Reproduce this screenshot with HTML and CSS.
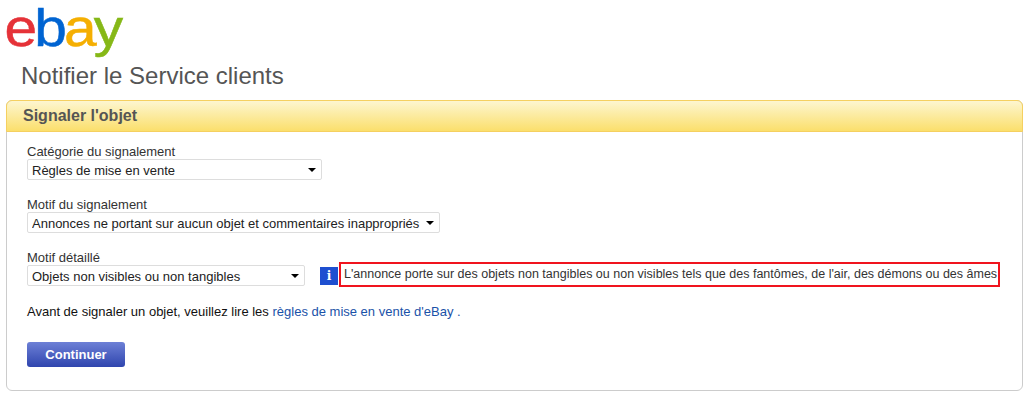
FILE: index.html
```html
<!DOCTYPE html>
<html lang="fr">
<head>
    <meta charset="UTF-8">
    <title>Notifier le Service clients</title>
    <link rel="stylesheet" href="styles.css">
</head>
<body>
    <div class="logo"><span class="logo-e">e</span><span class="logo-b">b</span><span class="logo-a">a</span><span class="logo-y">y</span></div>
    <h1>Notifier le Service clients</h1>

    <div class="panel">
        <h2 class="panel-title">Signaler l'objet</h2>
        <div class="panel-body">
            <div class="field">
                <label for="categorie">Catégorie du signalement</label>
                <div class="select-wrap select-cat">
                    <select id="categorie">
                        <option>Règles de mise en vente</option>
                    </select>
                </div>
            </div>
            <div class="field">
                <label for="motif">Motif du signalement</label>
                <div class="select-wrap select-motif">
                    <select id="motif">
                        <option>Annonces ne portant sur aucun objet et commentaires inappropriés</option>
                    </select>
                </div>
            </div>
            <div class="field">
                <label for="detail">Motif détaillé</label>
                <div class="detail-row">
                    <div class="select-wrap select-detail">
                        <select id="detail">
                            <option>Objets non visibles ou non tangibles</option>
                        </select>
                    </div>
                    <span class="info-icon">i</span>
                    <div class="notice">L'annonce porte sur des objets non tangibles ou non visibles tels que des fantômes, de l'air, des démons ou des âmes</div>
                </div>
            </div>
            <p class="rules">Avant de signaler un objet, veuillez lire les <a href="#">règles de mise en vente d'eBay .</a></p>
            <button type="button" class="btn-continue">Continuer</button>
        </div>
    </div>
</body>
</html>
```

FILE: styles.css
```css
body {
    margin: 0;
    background: #fff;
    font-family: "Liberation Sans", Arial, sans-serif;
    font-size: 13px;
    color: #333;
}
.logo {
    width: 100px;
    height: 57px;
    padding-left: 4px;
    font-size: 51px;
    line-height: 57px;
    letter-spacing: -2.5px;
    white-space: nowrap;
    -webkit-text-stroke: 0.5px;
    transform: scaleX(1.15);
    transform-origin: left;
}
.logo-e { color: #e53238; }
.logo-b { color: #0064d2; }
.logo-a { color: #f5af02; }
.logo-y { color: #86b817; }
h1 {
    margin: 0 0 6px 21px;
    height: 37px;
    font-size: 24px;
    font-weight: normal;
    line-height: 37px;
    color: #555;
}
.panel {
    margin: 0 9px 0 6px;
    height: 289px;
    border: 1px solid #ccc;
    border-radius: 6px;
}
.panel-title {
    margin: -1px -1px 0;
    height: 30px;
    border: 1px solid #f5d060;
    border-radius: 6px 6px 0 0;
    background: linear-gradient(#fdf6d0, #fbdf6c);
    padding-left: 16px;
    font-size: 16px;
    line-height: 30px;
    color: #555;
}
.panel-body {
    padding: 12px 20px 0;
}
.field {
    margin-bottom: 17px;
}
.field label {
    display: block;
    height: 15px;
    font-size: 13px;
    line-height: 15px;
    color: #333;
}
.select-wrap {
    position: relative;
    height: 21px;
    box-sizing: border-box;
    border: 1px solid #ddd;
    border-radius: 2px;
    background: #fff;
}
.select-wrap::after {
    content: "";
    position: absolute;
    top: 8px;
    right: 5px;
    border-style: solid;
    border-width: 4px 4px 0;
    border-color: #000 transparent transparent;
}
.select-wrap select {
    width: 100%;
    height: 19px;
    padding: 1px 0 0 4px;
    border: 0;
    background: transparent;
    appearance: none;
    font-family: inherit;
    font-size: 13px;
    color: #222;
}
.select-cat { width: 295px; }
.select-motif { width: 413px; }
.select-detail { width: 278px; }
.detail-row {
    display: flex;
    align-items: center;
}
.info-icon {
    width: 18px;
    height: 18px;
    margin-left: 15px;
    background: #1e4fd0;
    color: #fff;
    font-family: "DejaVu Serif", serif;
    font-size: 12px;
    font-weight: bold;
    line-height: 18px;
    text-align: center;
}
.notice {
    height: 25px;
    box-sizing: border-box;
    margin: -3px 0 -1px 1px;
    padding: 0 1px 0 3px;
    border: 2px solid #f0141e;
    font-size: 12.5px;
    line-height: 21px;
    white-space: nowrap;
    color: #333;
}
.rules {
    margin: 19px 0 23px;
    height: 14px;
    font-size: 13px;
    line-height: 14px;
    color: #111;
}
.rules a {
    color: #1a52a8;
    text-decoration: none;
}
.btn-continue {
    display: block;
    width: 98px;
    height: 25px;
    padding: 0;
    border: 0;
    border-radius: 3px;
    background: linear-gradient(#6d80d6, #2f45ae);
    color: #fff;
    font-family: inherit;
    font-size: 13px;
    font-weight: bold;
}
```
